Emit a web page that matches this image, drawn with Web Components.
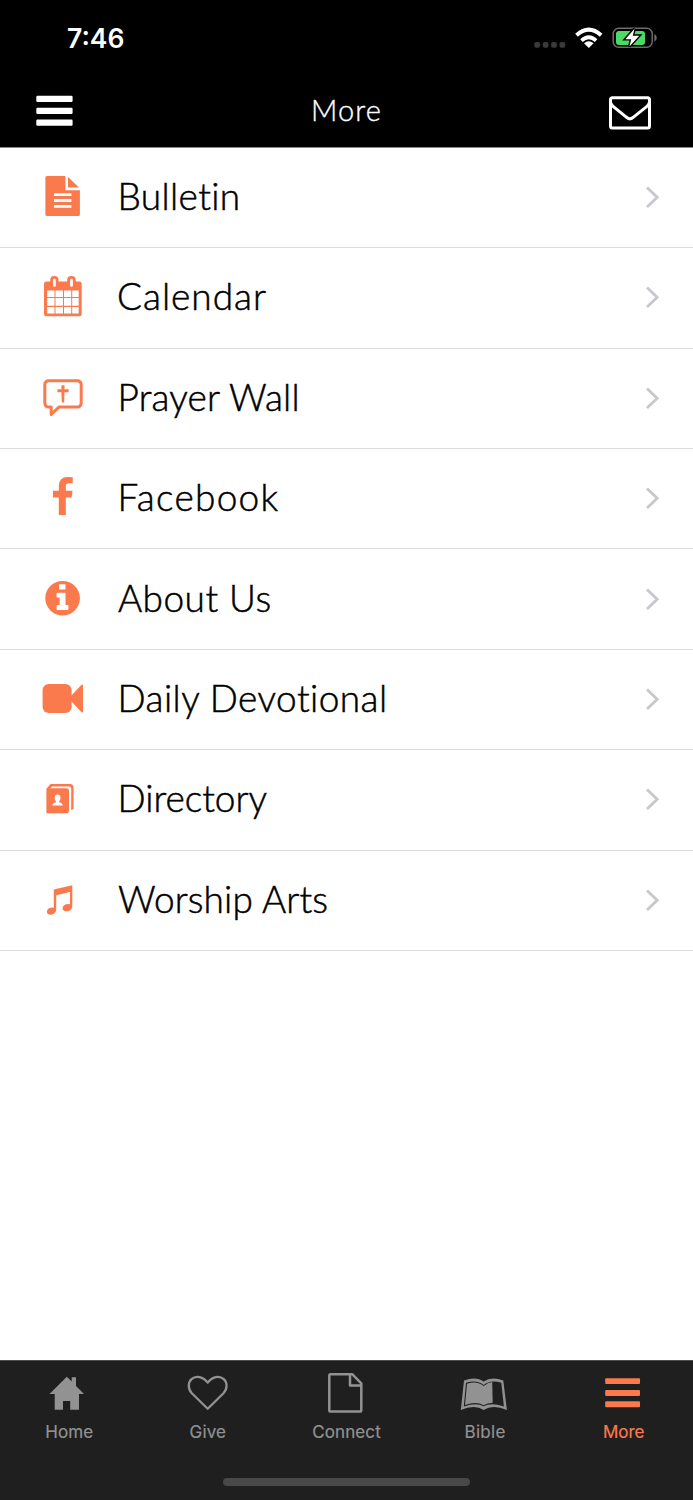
<!DOCTYPE html>
<html lang="en">
<head>
<meta charset="utf-8">
<title>More</title>
<style>
html,body{margin:0;height:100%;background:#fff}
body{overflow:hidden}
</style>
</head>
<body>
<app-screen>
  <status-bar slot="top" time="7:46"></status-bar>
  <nav-header slot="top">More</nav-header>
  <menu-row icon="bulletin" fit="118" ink="120.500">Bulletin</menu-row>
  <menu-row icon="calendar" fit="147" ink="119">Calendar</menu-row>
  <menu-row icon="prayer" fit="177.500" ink="120.500">Prayer Wall</menu-row>
  <menu-row icon="facebook" fit="158" ink="120.500">Facebook</menu-row>
  <menu-row icon="info" fit="151.500" ink="118">About Us</menu-row>
  <menu-row icon="video" fit="265" ink="120.500">Daily Devotional</menu-row>
  <menu-row icon="directory" fit="146" ink="120.500">Directory</menu-row>
  <menu-row icon="music" fit="209.500" ink="118">Worship Arts</menu-row>
  <tab-bar slot="bottom">
    <tab-item icon="home" fit="47">Home</tab-item>
    <tab-item icon="heart" fit="35.500">Give</tab-item>
    <tab-item icon="page" fit="68">Connect</tab-item>
    <tab-item icon="book" fit="40">Bible</tab-item>
    <tab-item icon="more" fit="40.500" active>More</tab-item>
  </tab-bar>
</app-screen>
<script>
// Each icon is [viewBox, width, height, markup]; shapes use screen coordinates.
const ICONS = {
  bulletin: ['40 174 46 46', 46, 46, '<path d="M47 176H65.400V190.300H79.900V214.500Q79.900 216 78.400 216H46.900Q45.400 216 45.400 214.500V177.500Q45.400 176 47 176ZM68 177L79 187.600H68ZM54 193.200V195.900H71.400V193.200ZM54 199.100V201.900H71.400V199.100ZM54 205V207.700H71.400V205Z" fill-rule="evenodd"/>'],
  calendar: ['40 274.400 46 46', 46, 46, '<rect x="44" y="282" width="37.700" height="34.700" rx="2.500"/><rect x="50.200" y="276.400" width="8.300" height="12" rx="4"/><rect x="67.200" y="276.400" width="8.600" height="12" rx="4"/><path fill="#fff" d="M47.200 291h7.300v6.400h-7.300zM55.500 291h7.500v6.400h-7.500zM64 291h7.200v6.400H64zM72.200 291h6.500v6.400h-6.500zM47.200 298.500h7.300v7.600h-7.300zM55.500 298.500h7.500v7.600h-7.500zM64 298.500h7.200v7.600H64zM72.200 298.500h6.500v7.600h-6.500zM47.200 307.300h7.300v6.500h-7.300zM55.500 307.300h7.500v6.500h-7.500zM64 307.300h7.200v6.500H64zM72.200 307.300h6.500v6.500h-6.500z"/><path stroke="#fff" stroke-width="2.800" stroke-linecap="round" d="M54.400 280.600v5.200M71.500 280.600v5.200"/>'],
  prayer: ['40 374.800 46 46', 46, 46, '<path fill="none" stroke="currentColor" stroke-width="3" stroke-linejoin="round" d="M49 380.500H77Q81.200 380.500 81.200 384.700V402.500Q81.200 406.800 77 406.800H59L51.200 414.200V406.800H49Q44.800 406.800 44.800 402.500V384.700Q44.800 380.500 49 380.500Z"/><path d="M61.400 385H64.500V389.100H68.600V392H64.500L64.200 402.200H61.800L61.400 392H57.400V389.100H61.400Z"/>'],
  facebook: ['40 475.200 46 46', 46, 46, '<path transform="translate(50.800 477.100) scale(.0229)" d="M959 12v264H802q-86 0-116 36t-30 108v189h293l-39 296H656v759H350V905H95V609h255V391q0-186 104-288.500T731 0q147 0 228 12z"/>'],
  info: ['40 575.600 46 46', 46, 46, '<path transform="translate(42.350 577.500) scale(.0226)" d="M1024 1376v-160q0-14-9-23t-23-9h-96V672q0-14-9-23t-23-9H544q-14 0-23 9t-9 23v160q0 14 9 23t23 9h96v320h-96q-14 0-23 9t-9 23v160q0 14 9 23t23 9h448q14 0 23-9t9-23zM896 480V320q0-14-9-23t-23-9H672q-14 0-23 9t-9 23v160q0 14 9 23t23 9h192q14 0 23-9t9-23zm768 416q0 209-103 385.500T1281.500 1561 896 1664t-385.500-103T231 1281.500 128 896t103-385.500T510.500 231 896 128t385.500 103T1561 510.500 1664 896z" style="display:none"/><circle cx="62.600" cy="597.800" r="17.300"/><path fill="#fff" d="M59.700 583.800h5.200q.6 0 .6.600v4q0 .6-.6.600h-5.200q-.6 0-.6-.6v-4q0-.6.600-.6zM57.200 592.300h7.700q.6 0 .6.600v11.700h2.300q.6 0 .6.600v3.700q0 .6-.6.600H57.200q-.6 0-.6-.6v-3.700q0-.6.600-.6h2.500v-7.400h-2.500q-.6 0-.6-.6v-3.700q0-.6.600-.6z"/>'],
  video: ['40 676 46 46', 46, 46, '<rect x="42.600" y="684" width="29" height="29" rx="6.200"/><path d="M71 696L81.300 684.900Q83 683.700 83 685.700V711.200Q83 713.300 81.300 712L71 701Z"/>'],
  directory: ['40 776.400 46 46', 46, 46, '<path d="M46.400 789.200L50.600 784.500H70Q73.600 784.500 73.600 788V809.500L71.200 810.500V789.200Q71.200 787 69 787H52L50.500 788.600H66.200Q69 788.600 69 791.400V810.800Q69 813.700 66.200 813.700H46.400Z"/><path fill="#fff" d="M57.600 795Q60.500 795 60.500 798.300Q60.500 800.800 59.100 801.700V802.600Q62.700 803.300 62.700 805.800H52.400Q52.400 803.300 56 802.600V801.700Q54.700 800.800 54.700 798.300Q54.700 795 57.600 795Z"/>'],
  music: ['40 876.800 46 46', 46, 46, '<path d="M53.800 889.200L72.300 885V906.500Q72.300 908.600 69.800 910.200Q66.500 911.800 64 910.600Q61.800 909 63 906.300Q65.200 903.300 70 904V891.800L56.200 895V910Q56.200 912.300 53.500 913.800Q50.200 915.300 47.900 913.900Q46 912 47.600 909.300Q49.800 906.700 53.800 907.500Z"/>'],
  chevron: ['640 180 26 34', 26, 34, '<path fill="none" stroke="#c7c7cc" stroke-width="2.800" d="M647 187.500L657.200 197.200L647 206.900"/>'],
  menu: ['34 92 44 38', 44, 38, '<rect x="36.300" y="95.700" width="36.300" height="6.300" rx="1.200"/><rect x="36.300" y="107.700" width="36.300" height="6.300" rx="1.200"/><rect x="36.300" y="119.500" width="36.300" height="6.300" rx="1.200"/>'],
  mail: ['606 92 48 42', 48, 42, '<g fill="none" stroke="currentColor" stroke-width="3" stroke-linejoin="round"><rect x="610.500" y="97.700" width="39" height="30.300" rx="2"/><path d="M610.500 102.500Q611.500 105.500 614 107.200L626 116.900Q629.900 120.700 633.800 116.900L646 107.200Q648.500 105.500 649.500 102.500"/></g>'],
  home: ['46 1370 42 42', 42, 42, '<path d="M49.500 1394L66.800 1376.700L71.700 1381.600V1377.200H76V1386L84 1394H79V1409.700H70.200V1401H63V1409.700H54.700V1394Z"/>'],
  heart: ['186 1370 44 42', 44, 42, '<path fill="none" stroke="currentColor" stroke-width="2.300" stroke-linejoin="round" d="M207.700 1408.700L191.800 1393.200C187.600 1388.800 188.100 1382.500 191.500 1379.200C196 1375.100 203 1376.600 207.700 1382.600C212.300 1376.600 219.300 1375.100 223.800 1379.200C227.300 1382.500 227.700 1388.800 223.500 1393.200Z"/>'],
  page: ['324 1370 42 44', 42, 44, '<path fill="none" stroke="currentColor" stroke-width="2.500" stroke-linejoin="round" d="M330.500 1374.200H352.200L361.300 1383.300V1410.300Q361.300 1411.600 360 1411.600H330.500Q329.300 1411.600 329.300 1410.300V1375.500Q329.300 1374.200 330.500 1374.200ZM350 1374.500V1385.400H361.200"/>'],
  book: ['459 1374 50 40', 50, 40, '<path d="M464 1380.500Q476 1375.800 483.700 1381.500Q491.500 1375.800 503.300 1380.500L506.900 1409.900Q492.500 1404.300 483.700 1410Q475 1404.300 460.800 1409.900Z"/><path fill="#1f1f1f" d="M466 1382.800Q477 1379.200 483.700 1385Q490.500 1379.200 501.300 1382.800L503.900 1406.500Q491 1402 483.700 1406.300Q476.500 1402 463.800 1406.500Z"/><path d="M467 1383.700Q477 1380.200 483.700 1386Q488 1382.300 492.200 1381.900L492.700 1402.800Q487.500 1402.800 483.700 1405.300Q476.500 1401 465 1405Z"/>'],
  more: ['602 1374 42 38', 42, 38, '<rect x="605.200" y="1378.200" width="34.800" height="5.900" rx="1"/><rect x="605.200" y="1390" width="34.800" height="5.900" rx="1"/><rect x="605.200" y="1401.300" width="34.800" height="5.900" rx="1"/>']
};
const icon = n => { const [v,w,h,b] = ICONS[n]; return `<svg viewBox="${v}" width="${w}" height="${h}" fill="currentColor" aria-hidden="true">${b}</svg>`; };

class Base extends HTMLElement {
  constructor(){ super(); this.attachShadow({mode:'open'}); }
}
// Tracks a label so that its glyphs span the requested width.
const ctx = document.createElement('canvas').getContext('2d');
function track(span, text, font, width){
  ctx.font = font;
  const m = ctx.measureText(text);
  const natural = m.actualBoundingBoxRight + m.actualBoundingBoxLeft;
  span.style.letterSpacing = ((width - natural) / (text.length - 1)).toFixed(3) + 'px';
  return -m.actualBoundingBoxLeft;
}
customElements.define('app-screen', class extends Base {
  connectedCallback(){ this.shadowRoot.innerHTML = `<style>
    :host{display:flex;flex-direction:column;width:693px;height:1500px;background:#fff}
    header{height:147.800px;box-sizing:border-box;border-bottom:1px solid #8a8a8a;background:#000;flex:none}
    main{flex:1;min-height:0}
    </style><header><slot name="top"></slot></header><main><slot></slot></main><slot name="bottom"></slot>`; }
});
customElements.define('status-bar', class extends Base {
  connectedCallback(){ this.shadowRoot.innerHTML = `<style>
    :host{display:flex;justify-content:space-between;align-items:center;height:76px;box-sizing:border-box;padding:0 33px 0 67px;color:#fff}
    span{font:600 26.500px/32px Inter,"Liberation Sans",sans-serif;letter-spacing:0}
    svg{display:block}
    </style><span>${this.getAttribute('time')}</span>
    <svg viewBox="530 20 130 36" width="130" height="36" fill="#fff">
      <g fill="#3a3a3a"><rect x="534.300" y="42" width="5.800" height="5.800" rx="2"/><rect x="542.700" y="42" width="5.800" height="5.800" rx="2"/><rect x="551.100" y="42" width="5.800" height="5.800" rx="2"/><rect x="559.500" y="42" width="5.800" height="5.800" rx="2"/></g>
      <g fill="none" stroke="#fff"><path stroke-width="4" d="M576.500 35.200Q588.800 24 601.100 35.200"/><path stroke-width="3.800" d="M581.500 40.600Q588.800 34 596.100 40.600"/></g>
      <path d="M584 43.200Q588.800 39.300 593.600 43.200L588.800 48Z"/>
      <rect x="613.200" y="28.300" width="39" height="19" rx="5.500" fill="none" stroke="#6c6c6c" stroke-width="1.500"/>
      <path fill="#6c6c6c" d="M654.300 34Q656.800 35 656.800 37.700T654.300 41.500Z"/>
      <rect x="616" y="31" width="29" height="14" rx="3" fill="#4cd964"/>
      <path stroke="#000" stroke-width="2.800" paint-order="stroke" d="M634.500 28.800L625.300 39.200H631.200L629.400 46.600L639.300 35.700H632.800Z"/>
    </svg>`; }
});
customElements.define('nav-header', class extends Base {
  connectedCallback(){ this.shadowRoot.innerHTML = `<style>
    :host{display:flex;justify-content:space-between;align-items:flex-start;height:70px;box-sizing:border-box;padding:16px 39px 0 34px;color:#fff}
    svg{display:block} h1{margin:-1px 0 0 9px;font:300 29px/38px Lato,"Liberation Sans",sans-serif;letter-spacing:1.100px;-webkit-text-stroke:.350px #fff}
    </style>${icon('menu')}<h1><slot></slot></h1>${icon('mail')}`; }
});
customElements.define('menu-row', class extends Base {
  connectedCallback(){ this.shadowRoot.innerHTML = `<style>
    :host{display:flex;align-items:center;height:100.400px;box-sizing:border-box;border-bottom:1px solid #dcdcdc;padding:0 27px .8px 40px;color:#fa7a4e}
    svg{display:block;flex:none}
    span{flex:1;color:#000;font:300 37px/46px Lato,"Liberation Sans",sans-serif;-webkit-text-stroke:.5px #000;white-space:nowrap;font-kerning:normal;margin-top:-2px}
    </style>${icon(this.getAttribute('icon'))}<span><slot></slot></span>${icon('chevron')}`;
    const s = this.shadowRoot.querySelector('span');
    const lead = track(s, this.textContent, '300 37px Lato', +this.getAttribute('fit'));
    s.style.marginLeft = (+this.getAttribute('ink') - 86 - lead) + 'px'; }
});
customElements.define('tab-bar', class extends Base {
  connectedCallback(){ this.shadowRoot.innerHTML = `<style>
    :host{display:flex;flex-direction:column;height:140px;flex:none;box-sizing:border-box;border-top:1px solid #4b4f4d;background:#1f1f1f}
    nav{display:grid;grid-template-columns:repeat(5,1fr);height:117px}
    i{display:block;width:247.500px;height:8px;border-radius:4px;background:#484848;margin-left:222.700px}
    </style><nav><slot></slot></nav><i></i>`; }
});
customElements.define('tab-item', class extends Base {
  connectedCallback(){
    const n = this.getAttribute('icon'), [x,y,w] = ICONS[n][0].split(' ').map(Number);
    const i = [...this.parentNode.children].indexOf(this), shift = x + w/2 - (i + .5) * 138.6;
    this.shadowRoot.innerHTML = `<style>
    :host{display:flex;flex-direction:column;align-items:center;color:#929292}
    :host([active]){color:#fa7a4e}
    .art{height:60px;box-sizing:border-box;padding-top:${y-1361}px;margin-left:${shift*2}px}
    svg{display:block}
    span{font:400 17px/22px Inter,"Liberation Sans",sans-serif;-webkit-text-stroke:.2px currentColor;white-space:nowrap}
    </style><div class="art">${icon(n)}</div><span><slot></slot></span>`;
    track(this.shadowRoot.querySelector('span'), this.textContent, '400 17px Inter', +this.getAttribute('fit')); }
});
</script>
</body>
</html>
